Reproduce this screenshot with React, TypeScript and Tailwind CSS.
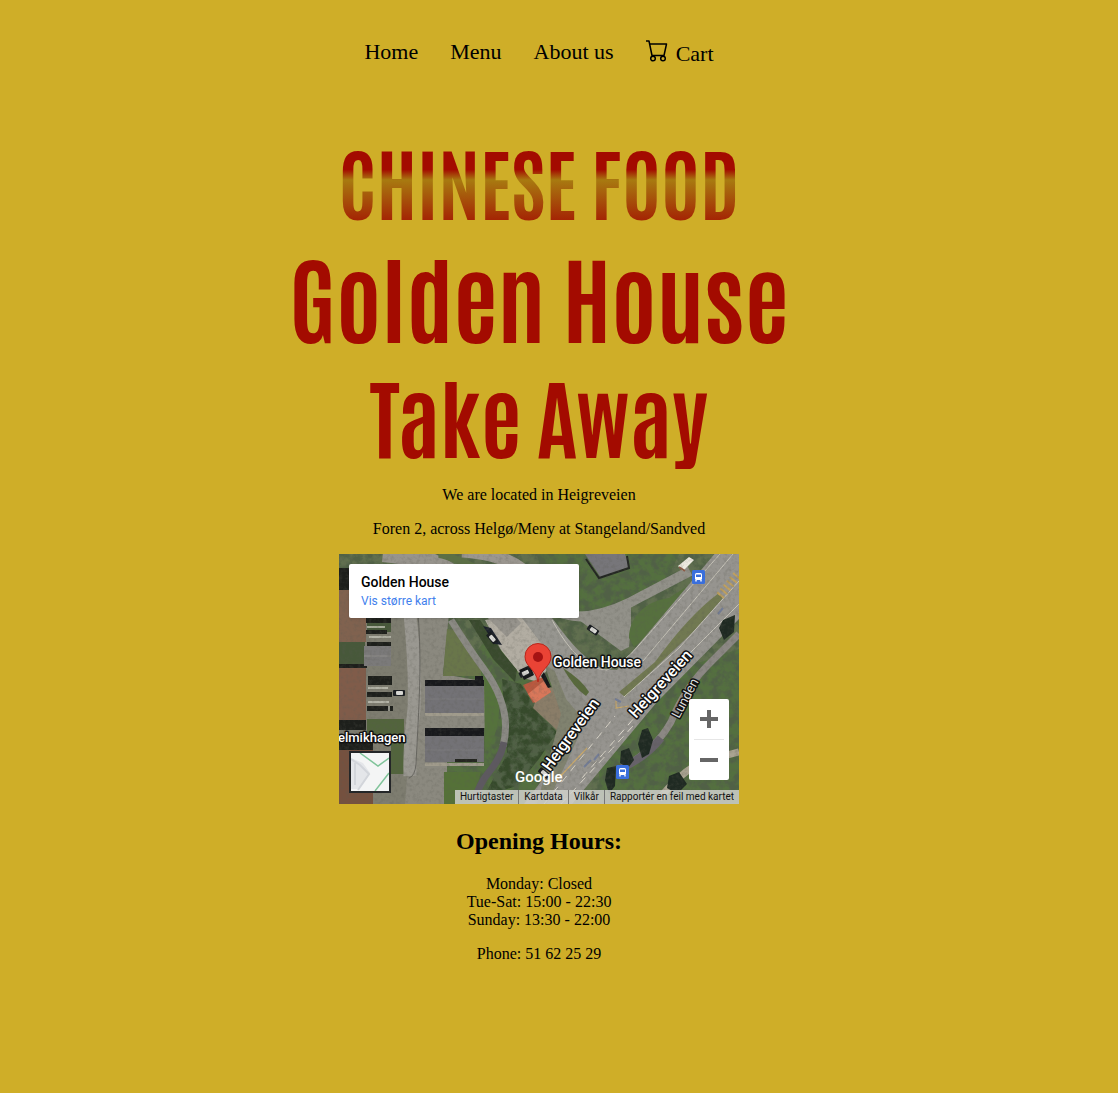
import React from "react";

const cars: [number, number, number][] = [
  [60, 139, 0],
  [153, 84, 50],
  [186, 119, -25],
  [254, 76, 35],
  [205, 219, 40],
];

const signs: [number, number][] = [
  [353, 16],
  [277, 211],
];

function Aerial() {
  return (
    <svg className="absolute inset-0 h-full w-full" viewBox="0 0 400 250" preserveAspectRatio="xMidYMid slice" aria-hidden="true">
      <defs>
        <filter id="leaves" x="0" y="0" width="100%" height="100%">
          <feTurbulence type="fractalNoise" baseFrequency="0.11" numOctaves="5" seed="7" />
          <feColorMatrix values="0 0 0 0 0.08  0 0 0 0 0.12  0 0 0 0 0.06  4 0 0 0 -1.6" />
        </filter>
        <filter id="grain" x="0" y="0" width="100%" height="100%">
          <feTurbulence type="fractalNoise" baseFrequency="0.27" numOctaves="3" seed="3" />
          <feColorMatrix values="0 0 0 0 0.1  0 0 0 0 0.1  0 0 0 0 0.08  0.6 0 0 0 -0.26" />
        </filter>
      </defs>
      <rect width="400" height="250" fill="#61704f" />
      <path d="M200 0H340L325 32 245 62 200 50ZM255 145 400 95V250H262ZM105 135 165 65 215 130 200 250H105Z" fill="#54703f" />
      <path d="M163 125 182 130 200 160 218 178 200 205 178 232 145 242 168 200Z" fill="#364a2b" />
      <rect width="400" height="250" filter="url(#leaves)" />

      {/* residential block on the west side */}
      <path d="M0 62H82V250H0Z" fill="#7e7d70" />
      <path d="M28 165H65V186H28ZM52 186 66 186 66 220 52 220Z" fill="#52643c" />
      <path d="M0 78H26V110H0ZM28 69H52V78H28Z" fill="#47583a" />
      <path d="M0 36H27V88H0Z" fill="#80624f" />
      <path d="M0 112H27V166H0Z" fill="#805c4a" />
      <path d="M0 196H34V250H0Z" fill="#75513f" />
      <path d="M0 14H10V36H0ZM27 64H52V69H27ZM27 76H48V80H27ZM28 88H52V92H28ZM0 110H28V114H0ZM29 122H53V131H29ZM28 138H53V143H28ZM28 152H54V157H28ZM0 166H27V176H0ZM0 184H34V196H0Z" fill="#1d1f1b" />
      <path d="M28 73H46M30 83H52M29 134H49M29 148H50M50 152V157" stroke="#c5c5b8" strokeWidth="1.4" />
      <path d="M25 92H52V112H25Z" fill="#7b7a7a" />
      <path d="M25 102H52" stroke="#908d8a" />

      {/* local streets and car park */}
      <path d="M80 60H110L104 120 148 128V174L108 174V250H66Z" fill="#8b897f" />
      <path d="M71 60C75 100 76 130 75 155 73 175 70 190 71 222" fill="none" stroke="#9a9891" strokeWidth="13" />
      <path d="M79 60C83 110 80 150 77 210Q76 222 70 224" fill="none" stroke="#5c5a55" strokeWidth="0.8" />
      <path d="M108 75 116 76 142 112V122H104Z" fill="#69764a" />
      <path d="M105 218H142L132 250H105Z" fill="#557138" />
      <path d="M145 125H156Q168 170 146 198Z" fill="#55723c" />
      <path d="M86 126H145V132H86ZM136 122H144V128H136ZM86 174H145V182H86Z" fill="#18191c" />
      <path d="M86 132H145V159H86ZM86 182H145V208H86Z" fill="#737276" />
      <path d="M86 145H145M86 196H145" stroke="#7c7a7c" />
      <path d="M86 159H145V162H86ZM86 209H145V212H86Z" fill="#a09b8c" />
      <path d="M116 205H138V208H116Z" fill="#242520" />
      <path d="M112 66Q130 95 145 115 174 155 164 192" fill="none" stroke="#8b8a84" strokeWidth="7" />
      <path d="M165 188Q162 204 150 218 140 230 134 250" fill="none" stroke="#5d5960" strokeWidth="7" />

      {/* forecourt and restaurant */}
      <path d="M146 66 188 60 215 105 200 128 184 124 162 96Z" fill="#b2ada2" />
      <path d="M130 66 141 66 163 98 178 116 176 128 154 105Z" fill="#394a2d" />
      <path d="M144 72 152 74 163 91 156 90Z" fill="#1b202a" />
      <path d="M202 132 216 134 228 160 220 178 194 154Z" fill="#8a7d68" />
      <path d="M184 131 204 123 212 138 194 149Z" fill="#b9593f" />
      <path d="M189 140 206 126 212 138 196 149Z" fill="#d9775a" />
      <path d="M180 116 191 111 195 121 185 126ZM205 118 212 133 209 134 202 122Z" fill="#151719" />

      {/* northern streets */}
      <path d="M44 -2C95 3 119 18 175 76" fill="none" stroke="#97948d" strokeWidth="20" />
      <path d="M100 0Q155 14 185 57" fill="none" stroke="#5c7045" strokeWidth="7" />
      <path d="M123 -3Q175 0 195 28" fill="none" stroke="#9b9790" strokeWidth="13" />
      <path d="M185 48C210 75 225 113 272 132" fill="none" stroke="#979690" strokeWidth="24" />
      <path d="M200 51Q232 65 250 62 278 57 305 41L351 17" fill="none" stroke="#929189" strokeWidth="10" />
      <path d="M228 58 267 57 292 52V72L290 93 282 97 240 66Z" fill="#929189" />
      <path d="M290 84C290 64 306 47 330 44L350 31 335 59 295 93Z" fill="#56703e" />
      <path d="M246 0H286L290 13 262 24Z" fill="#77767a" />
      <path d="M247 5 260 24 290 14 288 2" fill="none" stroke="#222521" strokeWidth="2" />
      <path d="M339 12 350 3 355 6 344 17Z" fill="#eeeae0" />
      <path d="M340 13 346 17" stroke="#8c5b47" strokeWidth="2" />

      {/* main road and junction */}
      <path d="M185 250 250 164 222 135 232 113 278 116 378 -3H400V65L318 148 233 250Z" fill="#96948f" />
      <path d="M316 108Q350 61 380 39L384 44 355 77 317 113 286 143 280 138Z" fill="#717951" />
      <path d="M201 97 218 109 232 136 250 160 208 250H198L222 160Z" fill="#80826f" />
      <path d="M205 102 221 113 233 142 250 162" fill="none" stroke="#8f8e87" strokeWidth="13" />
      <path d="M224 114Q243 126 250 138L247 142Q235 134 224 114Z" fill="#58693b" />
      <path d="M213 66Q240 116 268 116 285 109 300 91L381 0M394 0 304 107M285 143 340 94 400 27M300 150 400 50" fill="none" stroke="#c6c3b8" strokeWidth="1" />
      <path d="M205 250 276 162M222 250 294 172M243 224 303 155" fill="none" stroke="#ddd8cc" strokeWidth="1" strokeDasharray="8 6" />
      <path d="M216 228 248 194M277 145V154L290 152" fill="none" stroke="#caa96a" strokeWidth="1.2" />
      <path d="M381 42 400 19" stroke="#c0a15e" strokeWidth="9" strokeDasharray="2 3" />
      <path d="M245 213 252 206M255 206 260 200M276 145 282 148M379 60 384 54" stroke="#737d97" strokeWidth="2" />

      {/* eastern footpath */}
      <path d="M285 213Q317 195 332 168 346 133 373 107L400 80" fill="none" stroke="#8c8884" strokeWidth="7" />
      <path d="M283 214Q308 202 322 184" fill="none" stroke="#67626a" strokeWidth="8" />
      <path d="M320 245Q340 220 362 208L400 198" fill="none" stroke="#aaa391" strokeWidth="7" />
      <path d="M384 66 396 61 395 78 385 86 380 74ZM303 176 309 174 314 186 310 200 303 204 299 190ZM282 197 290 194 295 206 289 214 281 209ZM268 214 277 212 276 232 270 240 266 226ZM330 222 340 218 348 230 338 240 328 234Z" fill="#1f2a22" />
      {cars.map(([x, y, angle]) => (
        <g key={`${x}-${y}`} transform={`translate(${x} ${y}) rotate(${angle})`}>
          <rect x="-6" y="-3" width="12" height="6" rx="1" fill="#191c20" />
          <rect x="-3" y="-2" width="7" height="4" rx="1" fill="#d9d9d5" />
        </g>
      ))}
      <rect width="400" height="250" filter="url(#grain)" />

      <g fontFamily="Roboto, sans-serif" fontWeight="500" fill="#fff" stroke="#111" strokeWidth="3" strokeLinejoin="round" paintOrder="stroke">
        <text x="214" y="113" fontSize="14">Golden House</text>
        <text x="-1" y="188" fontSize="13">elmikhagen</text>
        <text transform="translate(211 218) rotate(-54)" fontSize="16">Heigreveien</text>
        <text transform="translate(297 165) rotate(-48)" fontSize="16">Heigreveien</text>
        <text transform="translate(340 165) rotate(-62)" fontSize="13" fontWeight="400" fill="#dedede">Lunden</text>
      </g>
      <text x="176" y="228" fontFamily="Roboto, sans-serif" fontSize="15" fontWeight="500" fill="#fff">Google</text>

      {signs.map(([x, y]) => (
        <g key={x} transform={`translate(${x} ${y})`}>
          <rect width="13" height="14" rx="1.5" fill="#3a6fdc" />
          <rect x="3" y="3" width="7" height="7" rx="1.5" fill="#fff" />
          <path d="M4 4.5H9V7H4Z" fill="#3a6fdc" />
          <path d="M4 10V11.5M9 10V11.5" stroke="#fff" strokeWidth="1.4" />
        </g>
      ))}

      <path d="M199 128C197 115 186 113 186 102.500A13 13 0 0 1 212 102.500C212 113 201 115 199 128Z" fill="#ea4335" stroke="#b9261b" />
      <circle cx="199" cy="103" r="5" fill="#a61313" />
    </svg>
  );
}

function Cart() {
  return (
    <svg className="mt-0.5 h-[22px] w-[22px]" viewBox="0 0 22 22" fill="none" stroke="currentColor" strokeWidth="1.5" strokeLinejoin="round" aria-hidden="true">
      <path d="M0 1H3L6 15.500H18L20.500 4H3.600" />
      <circle cx="7" cy="18.500" r="2.300" />
      <circle cx="17" cy="18.500" r="2.300" />
    </svg>
  );
}

function Map() {
  return (
    <section id="map" aria-label="Map" className="relative h-[250px] w-full max-w-[400px] overflow-hidden text-left font-['Roboto',sans-serif]">
      <Aerial />
      <div className="absolute left-[10px] top-[10px] h-[54px] w-[230px] rounded-xs bg-white px-3 pt-2 shadow-sm">
        <h3 className="text-sm font-medium leading-5 text-black">Golden House</h3>
        <a href="#map" className="block text-xs leading-[18px] text-[#427fed]">Vis større kart</a>
      </div>
      <button aria-label="Show map" className="absolute bottom-[11px] left-[10px] h-[42px] w-[42px] border-2 border-[#242628] bg-[#f4f5f5]">
        <svg className="h-full w-full" viewBox="0 0 38 38" aria-hidden="true">
          <path d="M0 5 12 10 19 20 8 36H0Z" fill="#e4e6e9" />
          <path d="M0 6 9 12 18 21 7 37M4 10V32" fill="none" stroke="#d2d5da" strokeWidth="2" />
          <path d="M9 0 27 13 38 5M24 38 38 20" fill="none" stroke="#80c49a" strokeWidth="1.5" />
        </svg>
      </button>
      <div className="absolute bottom-6 right-[10px] flex w-10 flex-col rounded-xs bg-white px-[5px] text-[#666]">
        <button aria-label="Zoom in" className="flex h-[41px] items-center justify-center border-b border-[#e6e6e6]">
          <svg className="h-[18px] w-[18px] shrink-0" viewBox="0 0 18 18" aria-hidden="true"><path d="M0 9H18M9 0V18" stroke="currentColor" strokeWidth="4" /></svg>
        </button>
        <button aria-label="Zoom out" className="flex h-10 items-center justify-center">
          <svg className="h-[18px] w-[18px] shrink-0" viewBox="0 0 18 18" aria-hidden="true"><path d="M0 9H18" stroke="currentColor" strokeWidth="4" /></svg>
        </button>
      </div>
      <div className="absolute bottom-0 right-0 flex h-[14px] items-center divide-x divide-[#777] whitespace-nowrap bg-[#d0d1cb]/85 text-[10px] leading-[14px] text-[#111]">
        <button className="px-[5px]">Hurtigtaster</button>
        <span className="px-[5px]">Kartdata</span>
        <a href="#terms" className="px-[5px]">Vilkår</a>
        <a href="#report" className="px-[5px]">Rapportér en feil med kartet</a>
      </div>
    </section>
  );
}

export default function App() {
  return (
    <div className="min-h-screen bg-[#cfae28] pr-10 font-['Liberation_Serif',serif] text-black">
      <nav className="flex flex-wrap justify-center gap-8 pt-[38px] text-[22px] leading-7">
        <a href="#home">Home</a>
        <a href="#menu">Menu</a>
        <a href="#about">About us</a>
        <a href="#cart" className="flex gap-2"><Cart /><span className="pt-0.5">Cart</span></a>
      </nav>
      <main className="flex flex-col items-center pt-[60px] text-center leading-[18px]">
        <div className="mb-4 font-['Antonio','Roboto_Condensed','Liberation_Sans_Narrow','DejaVu_Sans_Condensed',sans-serif] font-bold text-[#a30b00]">
          <h1 className="bg-[linear-gradient(to_bottom,#a30b00_40%,#a87a10_50%,#a30b00_100%)] bg-clip-text text-[80px] leading-[104px] text-transparent">CHINESE FOOD</h1>
          <h1 className="text-[96px] leading-[124px]">Golden House</h1>
          <h1 className="text-[88px] leading-[114px]">Take Away</h1>
        </div>
        <p className="mb-4">We are located in Heigreveien</p>
        <p className="mb-4">Foren 2, across Helgø/Meny at Stangeland/Sandved</p>
        <Map />
        <h2 className="mb-5 mt-[23px] text-2xl font-bold leading-7">Opening Hours:</h2>
        <p className="mb-4">Monday: Closed<br />Tue-Sat: 15:00 - 22:30<br />Sunday: 13:30 - 22:00</p>
        <p>Phone: 51 62 25 29</p>
      </main>
    </div>
  );
}
